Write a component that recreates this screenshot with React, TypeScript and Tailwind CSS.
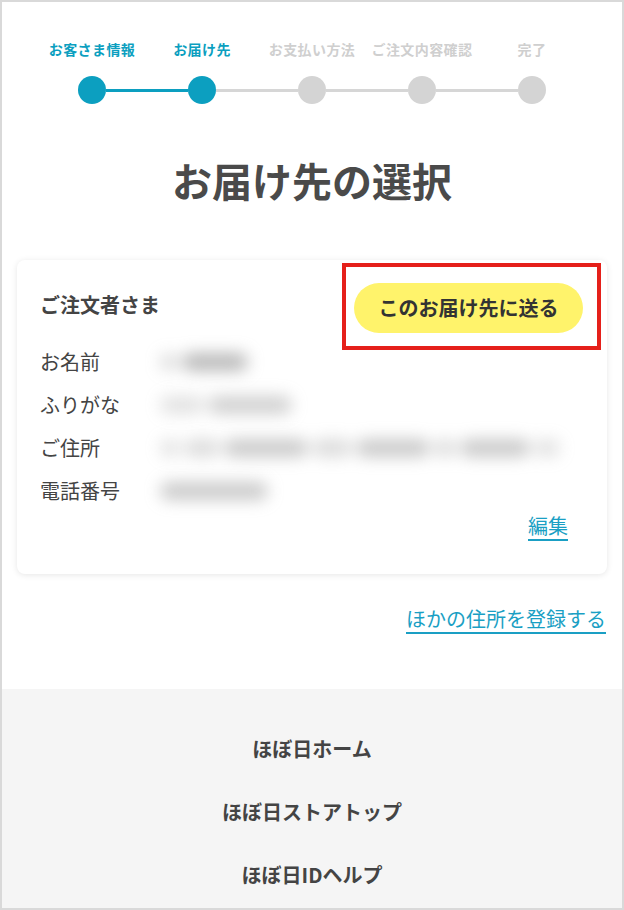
import React from "react";

const steps = [
  { label: "お客さま情報", done: true },
  { label: "お届け先", done: true },
  { label: "お支払い方法", done: false },
  { label: "ご注文内容確認", done: false },
  { label: "完了", done: false },
];

// blurred placeholder for masked personal data
const Blur = ({ parts }: { parts: [number, number][] }) => (
  <div className="flex items-center gap-[4px] blur-[8px]">
    {parts.map(([w, o], i) => (
      <div
        key={i}
        className="h-[18px] rounded-full bg-[#8a8a8a]"
        style={{ width: w, opacity: o }}
      />
    ))}
  </div>
);

const rows: { label: string; parts: [number, number][] }[] = [
  { label: "お名前", parts: [[18, 0.3], [66, 0.6]] },
  { label: "ふりがな", parts: [[44, 0.25], [84, 0.4]] },
  {
    label: "ご住所",
    parts: [
      [20, 0.25],
      [36, 0.3],
      [84, 0.45],
      [40, 0.3],
      [74, 0.45],
      [22, 0.3],
      [70, 0.45],
      [26, 0.25],
    ],
  },
  { label: "電話番号", parts: [[108, 0.45]] },
];

export default function App() {
  return (
    <div
      className="w-[624px] h-[910px] border-2 border-[#d9d9d9] bg-white flex flex-col text-[#444]"
      style={{ fontFamily: '"Noto Sans CJK JP", "Noto Sans", sans-serif' }}
    >
      <div className="px-[35px] pt-[37px]">
        <div className="grid grid-cols-5">
          {steps.map((s) => (
            <div
              key={s.label}
              className={`text-center text-[14px] leading-[20px] font-bold tracking-[0.03em] ${
                s.done ? "text-[#0c9fc0]" : "text-[#cfcfcf]"
              }`}
            >
              {s.label}
            </div>
          ))}
        </div>
        <div className="flex items-center px-[41px] mt-[17px]">
          {steps.map((s, i) => (
            <React.Fragment key={s.label}>
              {i > 0 && (
                <div
                  className={`flex-1 h-[3px] ${
                    s.done ? "bg-[#0c9fc0]" : "bg-[#d6d6d6]"
                  }`}
                />
              )}
              <div
                className={`size-[28px] rounded-full ${
                  s.done ? "bg-[#0c9fc0]" : "bg-[#d4d4d4]"
                }`}
              />
            </React.Fragment>
          ))}
        </div>
      </div>

      <h1 className="mt-[52px] text-center text-[40px] leading-[48px] font-bold text-[#4a4a4a]">
        お届け先の選択
      </h1>

      <div className="mx-[15px] mt-[56px] rounded-[8px] bg-white shadow-[0_1px_6px_rgba(0,0,0,0.1)] pl-[23px] pr-[24px] pt-[23px] pb-[34px]">
        <div className="flex items-center justify-between">
          <div className="text-[20px] font-bold leading-[28px] text-[#444] mt-[-6px]">
            ご注文者さま
          </div>
          <div className="relative">
            <button className="h-[50px] w-[229px] rounded-full bg-[#fff36b] text-[20px] font-bold text-[#333]">
              このお届け先に送る
            </button>
            <div className="absolute left-[-12px] right-[-18px] top-[-20px] bottom-[-17px] border-[4px] border-[#e5201a]" />
          </div>
        </div>

        <div className="mt-[7px]">
          {rows.map((r) => (
            <div key={r.label} className="flex items-center h-[43px]">
              <div className="w-[120px] text-[20px] leading-[28px] text-[#444]">
                {r.label}
              </div>
              <Blur parts={r.parts} />
            </div>
          ))}
        </div>

        <div className="flex justify-end pr-[15px]">
          <a className="text-[20px] leading-[28px] text-[#1a9fc4] underline underline-offset-[5px]">
            編集
          </a>
        </div>
      </div>

      <div className="flex justify-end pr-[16px] mt-[31px]">
        <a className="text-[20px] leading-[28px] text-[#1a9fc4] underline underline-offset-[5px]">
          ほかの住所を登録する
        </a>
      </div>

      <footer className="mt-auto bg-[#f5f5f5] pt-[28px] pb-[2px] flex flex-col items-center">
        {["ほぼ日ホーム", "ほぼ日ストアトップ", "ほぼ日IDヘルプ"].map((t) => (
          <a
            key={t}
            className="h-[63px] flex items-center text-[20px] font-bold text-[#444]"
          >
            {t}
          </a>
        ))}
      </footer>
    </div>
  );
}
